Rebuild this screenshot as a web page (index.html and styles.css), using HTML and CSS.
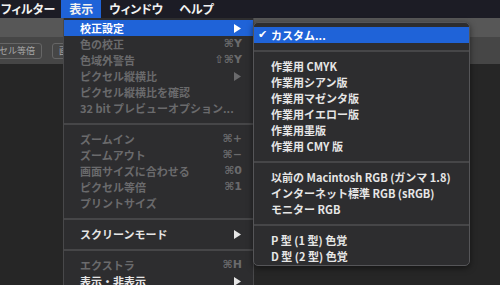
FILE: index.html
```html
<!DOCTYPE html>
<html>
<head>
	<meta charset="utf-8">
	<title>表示メニュー</title>
	<link rel="stylesheet" href="styles.css">
</head>
<body>
	<!-- メニューバー -->
	<div class="menubar">
		<span class="mb-item first">フィルター</span>
		<span class="mb-item active">表示</span>
		<span class="mb-item">ウィンドウ</span>
		<span class="mb-item">ヘルプ</span>
	</div>

	<!-- ツールバー -->
	<div class="toolbar-top"></div>
	<div class="toolbar">
		<span class="tb-btn cut">セル等倍</span>
		<span class="tb-btn">画面サイズ</span>
	</div>
	<div class="workspace"></div>

	<!-- 表示メニュー -->
	<div class="menu main-menu">
		<div class="item hl"><span class="label">校正設定</span><svg class="arrow" width="7" height="9" viewBox="0 0 7 9"><path d="M0 0 L7 4.5 L0 9 Z"/></svg></div>
		<div class="item disabled"><span class="label">色の校正</span><span class="key">⌘Y</span></div>
		<div class="item disabled"><span class="label">色域外警告</span><span class="key">⇧⌘Y</span></div>
		<div class="item disabled"><span class="label">ピクセル縦横比</span><svg class="arrow" width="7" height="9" viewBox="0 0 7 9"><path d="M0 0 L7 4.5 L0 9 Z"/></svg></div>
		<div class="item disabled"><span class="label">ピクセル縦横比を確認</span></div>
		<div class="item disabled"><span class="label">32 bit プレビューオプション...</span></div>
		<div class="sep"></div>
		<div class="item disabled"><span class="label">ズームイン</span><span class="key">⌘+</span></div>
		<div class="item disabled"><span class="label">ズームアウト</span><span class="key">⌘−</span></div>
		<div class="item disabled"><span class="label">画面サイズに合わせる</span><span class="key">⌘0</span></div>
		<div class="item disabled"><span class="label">ピクセル等倍</span><span class="key">⌘1</span></div>
		<div class="item disabled"><span class="label">プリントサイズ</span></div>
		<div class="sep"></div>
		<div class="item"><span class="label">スクリーンモード</span><svg class="arrow" width="7" height="9" viewBox="0 0 7 9"><path d="M0 0 L7 4.5 L0 9 Z"/></svg></div>
		<div class="sep"></div>
		<div class="item disabled"><span class="label">エクストラ</span><span class="key">⌘H</span></div>
		<div class="item"><span class="label">表示・非表示</span><svg class="arrow" width="7" height="9" viewBox="0 0 7 9"><path d="M0 0 L7 4.5 L0 9 Z"/></svg></div>
	</div>

	<!-- 校正設定サブメニュー -->
	<div class="menu sub-menu">
		<div class="item hl"><span class="check">✔</span><span class="label">カスタム...</span></div>
		<div class="sep"></div>
		<div class="item"><span class="check"></span><span class="label">作業用 CMYK</span></div>
		<div class="item"><span class="check"></span><span class="label">作業用シアン版</span></div>
		<div class="item"><span class="check"></span><span class="label">作業用マゼンタ版</span></div>
		<div class="item"><span class="check"></span><span class="label">作業用イエロー版</span></div>
		<div class="item"><span class="check"></span><span class="label">作業用墨版</span></div>
		<div class="item"><span class="check"></span><span class="label">作業用 CMY 版</span></div>
		<div class="sep"></div>
		<div class="item"><span class="check"></span><span class="label">以前の Macintosh RGB (ガンマ 1.8)</span></div>
		<div class="item"><span class="check"></span><span class="label">インターネット標準 RGB (sRGB)</span></div>
		<div class="item"><span class="check"></span><span class="label">モニター RGB</span></div>
		<div class="sep"></div>
		<div class="item"><span class="check"></span><span class="label">P 型 (1 型) 色覚</span></div>
		<div class="item"><span class="check"></span><span class="label">D 型 (2 型) 色覚</span></div>
	</div>
</body>
</html>
```

FILE: styles.css
```css
body{
	margin: 0;
	width: 500px;
	height: 285px;
	overflow: hidden;
	position: relative;
	background-color: #262626;
	font-family: "Noto Sans CJK JP", sans-serif;
}

/* メニューバー */
.menubar{
	display: flex;
	height: 18px;
	line-height: 18px;
	background-color: #1c1c25;
	color: #f2f2f2;
	font-size: 12px;
	font-weight: 700;
	font-feature-settings: "palt";
}
.mb-item{
	padding: 0 8px;
}
.mb-item.first{
	padding-left: 1px;
	padding-right: 6px;
}
.mb-item.active{
	padding: 0 8px;
	background-color: #1f63d8;
}

/* ツールバー */
.toolbar-top{
	height: 19px;
	background-color: #575757;
}
.toolbar{
	height: 27px;
	background-color: #464646;
	display: flex;
	align-items: center;
	gap: 10px;
}
.tb-btn{
	height: 14px;
	line-height: 14px;
	padding: 0 6px;
	border: 1px solid #666;
	border-radius: 3px;
	color: #a8a8a8;
	font-size: 9px;
}
.tb-btn.cut{
	margin-left: -8px;
}
.workspace{
	height: 221px;
	background-color: #262626;
}

/* メニュー共通 */
.menu{
	position: absolute;
	overflow: hidden;
	background-color: #2d2d2f;
	color: #e6e6e6;
	font-size: 11px;
	font-weight: 700;
}
.main-menu{
	left: 63px;
	top: 18px;
	width: 189px;
	height: 265px;
	padding-top: 2px;
	border-left: 1px solid #48484a;
	border-right: 1px solid #48484a;
}
.sub-menu{
	left: 253px;
	top: 22px;
	width: 215px;
	padding: 4px 0 1px;
	border: 1px solid #555558;
	border-radius: 5px;
	box-shadow: 0 2px 6px rgba(0,0,0,0.5);
}

.item{
	display: flex;
	align-items: center;
	height: 16px;
	line-height: 16px;
	padding: 0 11px 0 16px;
	white-space: nowrap;
}
.sub-menu .item{
	padding-left: 4px;
}
.label{
	flex: 1;
}
.key{
	font-family: "DejaVu Sans", sans-serif;
	font-size: 11px;
}
.arrow{
	flex: none;
	fill: #e6e6e6;
	margin-right: 1px;
}
.check{
	flex: none;
	width: 13px;
	font-family: "DejaVu Sans", sans-serif;
	font-size: 11px;
}

.item.disabled{
	color: #6a6a6c;
}
.item.disabled .arrow{
	fill: #6a6a6c;
}
.item.hl{
	background-color: #1f63d8;
	color: #fff;
}
.item.hl .arrow{
	fill: #fff;
}

/* 区切り線 */
.sep{
	height: 15px;
	display: flex;
	align-items: center;
}
.sep::before{
	content: "";
	flex: 1;
	height: 2px;
	background-color: #464648;
}
```
